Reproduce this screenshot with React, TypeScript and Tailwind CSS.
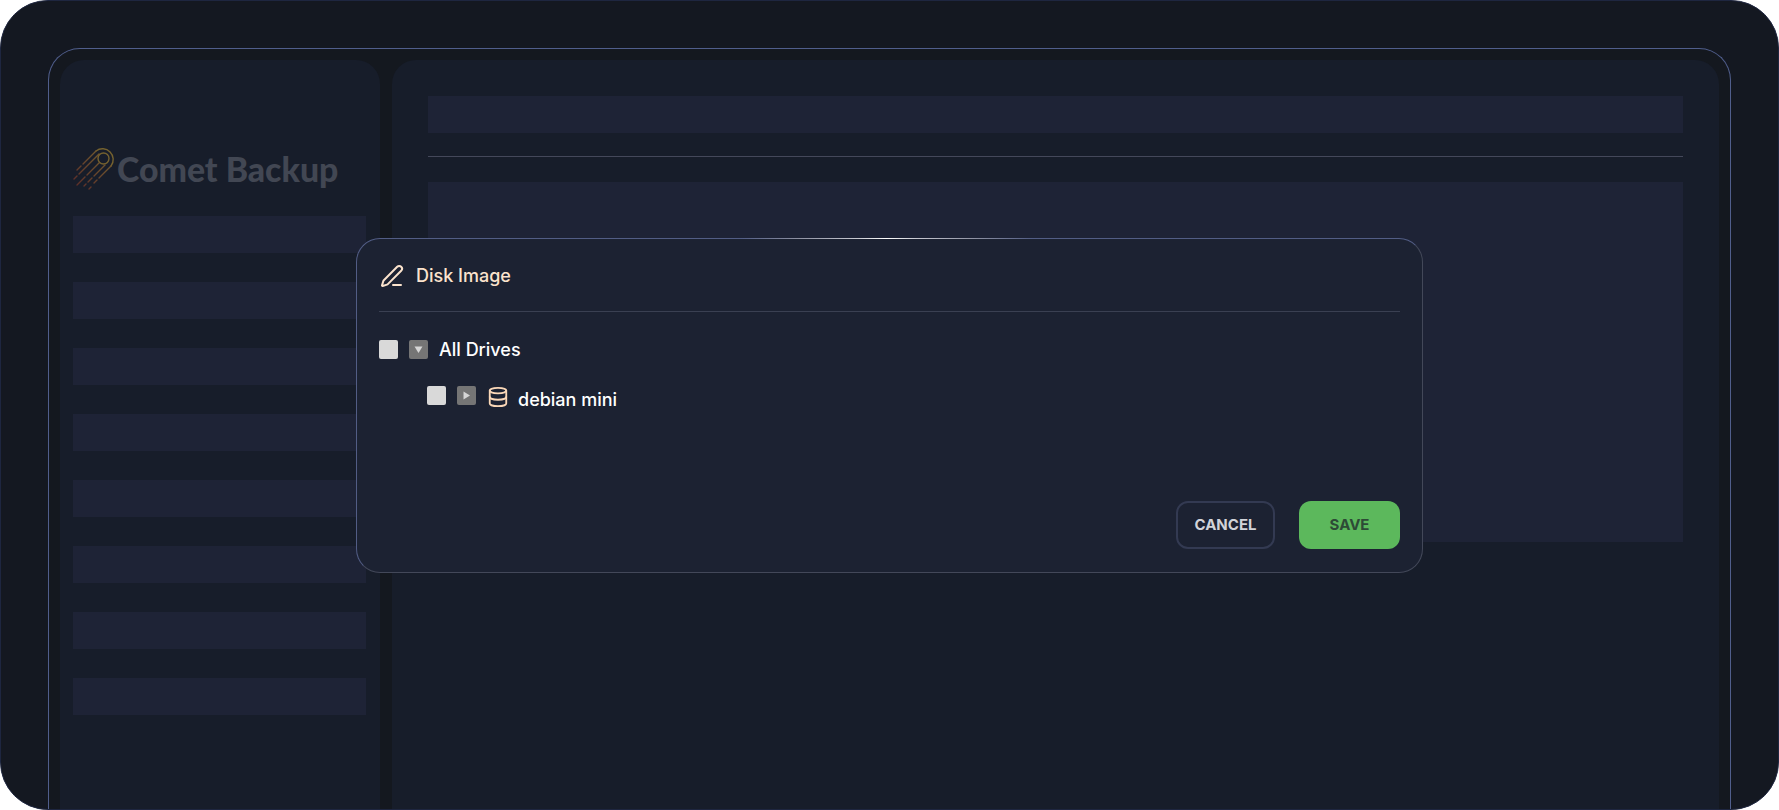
import { PenLine, Database } from "lucide-react";

const bars = [0, 1, 2, 3, 4, 5, 6, 7];

function CometLogo() {
  const lines = [
    "M95 148 L82 161",
    "M80 163 L76 167",
    "M98 151 L78 171",
    "M76 173 L73 176",
    "M98 160 L86 172",
    "M84 174 L76 182",
    "M104 162 L93 173",
    "M91 175 L87 179",
    "M110 163 L98 175",
    "M96 177 L93 180",
    "M85 181 L83 183",
    "M90 184 L88 186",
  ];
  return (
    <svg width="44" height="46" viewBox="72 144 44 46" fill="none" className="shrink-0">
      <defs>
        <linearGradient id="cometGrad" x1="110" y1="148" x2="74" y2="186" gradientUnits="userSpaceOnUse">
          <stop offset="0" stopColor="#75622f" />
          <stop offset="1" stopColor="#5b2a28" />
        </linearGradient>
      </defs>
      <circle cx="102.5" cy="155.5" r="5.5" stroke="#75622f" strokeWidth="1.4" />
      <path d="M95 148 A 10.7 10.7 0 0 1 110 163" stroke="#75622f" strokeWidth="1.4" strokeLinecap="round" />
      {lines.map((d, i) => (
        <path key={i} d={d} stroke="url(#cometGrad)" strokeWidth="1.4" strokeLinecap="round" />
      ))}
    </svg>
  );
}

function Check() {
  return <span className="block h-[19px] w-[19px] rounded-[2px] bg-[#d9d9d9]" />;
}

function Toggle({ open }: { open: boolean }) {
  return (
    <span className="flex h-[19px] w-[19px] items-center justify-center rounded-[2px] bg-[#757575]">
      <svg width="9" height="9" viewBox="0 0 9 9">
        <path d={open ? "M0.5 1.5H8.5L4.5 8Z" : "M1.5 0.5L8 4.5L1.5 8.5Z"} fill="#d6d6d6" />
      </svg>
    </span>
  );
}

export default function App() {
  return (
    <div className="relative h-[810px] w-[1779px] overflow-hidden bg-white font-['Inter',sans-serif]">
      <div className="flex h-full flex-col rounded-[48px] border border-[#1e2640] bg-[#141821] px-[47px] pt-[47px]">
        <div className="flex min-h-0 flex-1 gap-[12px] rounded-t-[32px] border border-b-0 border-[#505e8c] bg-[#14181f] px-[11px] pt-[11px]">
          <aside className="flex w-[320px] shrink-0 flex-col rounded-t-[24px] bg-[#171d2a] pl-[13px] pr-[14px] pt-[84px]">
            <div className="flex h-[51px] items-center">
              <CometLogo />
              <span className="font-['Lato',sans-serif] text-[33.8px] font-black leading-none text-[#424753]">Comet Backup</span>
            </div>
            <div className="mt-[21px] flex flex-col gap-[29px]">
              {bars.map((b) => (
                <div key={b} className="h-[37px] bg-[#1e2336]" />
              ))}
            </div>
          </aside>
          <main className="flex-1 rounded-t-[24px] bg-[#171d2a] pl-[36px] pr-[36px] pt-[36px]">
            <div className="h-[37px] bg-[#1e2336]" />
            <div className="mt-[23px] h-px bg-[#44485a]" />
            <div className="mt-[25px] h-[360px] bg-[#1e2336]" />
          </main>
        </div>
      </div>

      <div className="absolute left-[356px] top-[238px] flex h-[335px] w-[1067px] flex-col rounded-[24px] border border-t-[#525d85] border-l-[#525d85] border-r-[#434859] border-b-[#434859] bg-[#1c2232] px-[22px]">
        <div className="absolute left-[384px] right-[390px] top-[-1px] h-px bg-[linear-gradient(90deg,#525d85,#8f92a3_20%,#c8c9d2_40%,#ffffff_50%,#c8c9d2_60%,#8f92a3_80%,#525d85)]" />
        <div className="flex h-[73px] items-center gap-[12px] border-b border-[#3a4052] pt-[2px] text-[#fbe3cd]">
          <PenLine size={24} strokeWidth={2} className="ml-[1px]" />
          <span className="text-[18px] font-medium leading-none">Disk Image</span>
        </div>
        <div className="mt-[28px] flex h-[19px] items-center text-[18px] font-medium leading-none text-white">
          <Check />
          <span className="ml-[11px]"><Toggle open /></span>
          <span className="ml-[11px] mt-[1px]">All Drives</span>
        </div>
        <div className="ml-[48px] mt-[27px] flex h-[19px] items-center text-[18px] font-medium leading-none text-white">
          <Check />
          <span className="ml-[11px]"><Toggle open={false} /></span>
          <Database size={22} strokeWidth={2} className="ml-[11px] mt-[2px] text-[#fbd8b8]" />
          <span className="ml-[9px] mt-[8px]">debian mini</span>
        </div>
        <div className="mt-auto mb-[23px] flex justify-end gap-[24px]">
          <button className="h-[48px] w-[99px] rounded-[12px] border-2 border-[#333a52] text-[15px] font-bold text-[#d1d3d9]">CANCEL</button>
          <button className="h-[48px] w-[101px] rounded-[12px] bg-[#5cb85c] text-[15px] font-bold text-[#2d4a36]">SAVE</button>
        </div>
      </div>
    </div>
  );
}
